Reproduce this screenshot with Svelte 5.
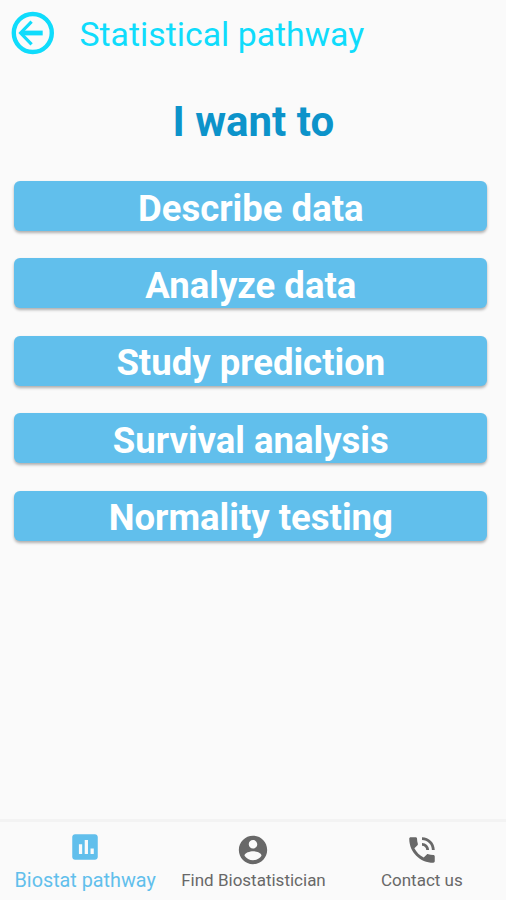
<script>
  const actions = ['Describe data', 'Analyze data', 'Study prediction', 'Survival analysis', 'Normality testing'];
</script>

<div class="screen">
  <header>
    <button class="back" aria-label="Back">
      <svg width="44" height="44" viewBox="0 0 44 44" fill="none" stroke="#0fdcfc">
        <circle cx="21.8" cy="22" r="19" stroke-width="4.4" />
        <path d="M31.7 22H10" stroke-width="4.8" />
        <path d="M20.6 10.6L9.6 22L20.6 33.4" stroke-width="3.2" />
      </svg>
    </button>
    <span class="title">Statistical pathway</span>
  </header>
  <main>
    <h1>I want to</h1>
    <div class="actions">
      {#each actions as action}
        <button class="action"><span>{action}</span></button>
      {/each}
    </div>
  </main>
  <nav>
    <a class="tab active" href="#biostat">
      <svg width="34" height="34" viewBox="0 0 24 24"><path d="M19 3H5c-1.1 0-2 .9-2 2v14c0 1.1.9 2 2 2h14c1.1 0 2-.9 2-2V5c0-1.1-.9-2-2-2zM10 17H7.7v-7h2.3v7zm4.1 0h-2.3V7h2.3v10zm4.1 0h-2.3v-4h2.3v4z" /></svg>
      <span>Biostat pathway</span>
    </a>
    <a class="tab" href="#find">
      <svg width="34" height="34" viewBox="0 0 24 24"><path d="M12 2C6.48 2 2 6.48 2 12s4.48 10 10 10 10-4.48 10-10S17.52 2 12 2zm0 3c1.66 0 3 1.34 3 3s-1.34 3-3 3-3-1.34-3-3 1.34-3 3-3zm0 14.2c-2.5 0-4.71-1.28-6-3.22.03-1.99 4-3.08 6-3.08 1.99 0 5.97 1.09 6 3.08-1.29 1.94-3.5 3.22-6 3.22z" /></svg>
      <span>Find Biostatistician</span>
    </a>
    <a class="tab" href="#contact">
      <svg width="34" height="34" viewBox="0 0 24 24"><path d="M20 15.5c-1.25 0-2.45-.2-3.57-.57-.1-.03-.21-.05-.31-.05-.26 0-.51.1-.71.29l-2.2 2.2c-2.83-1.44-5.15-3.75-6.59-6.59l2.2-2.21c.28-.26.36-.65.25-1C8.7 6.45 8.5 5.25 8.5 4c0-.55-.45-1-1-1H4c-.55 0-1 .45-1 1 0 9.39 7.61 17 17 17 .55 0 1-.45 1-1v-3.5c0-.55-.45-1-1-1zM19 12h2c0-4.97-4.03-9-9-9v2c3.87 0 7 3.13 7 7zm-4 0h2c0-2.76-2.24-5-5-5v2c1.66 0 3 1.34 3 3z" /></svg>
      <span>Contact us</span>
    </a>
  </nav>
</div>

<style>
  :global(body) {
    background: #fafafa;
  }

  .screen {
    box-sizing: border-box;
    display: flex;
    flex-direction: column;
    width: 506px;
    height: 900px;
    overflow: hidden;
    background: #fafafa;
    font-family: Roboto, sans-serif;
    white-space: nowrap;
  }

  button {
    padding: 0;
    border: 0;
    background: none;
    font: inherit;
  }

  header {
    display: flex;
    align-items: center;
    gap: 24.5px;
    height: 66px;
    padding-left: 11px;
  }

  .back {
    width: 44px;
    height: 44px;
  }

  .back svg {
    display: block;
  }

  .title {
    padding-top: 4px;
    color: #0fdcfc;
    font-size: 33.8px;
    line-height: 40px;
  }

  main {
    flex: 1;
    padding: 31px 18.7px 0 14.3px;
  }

  h1 {
    margin: 0;
    padding-left: 5px;
    text-align: center;
    color: #0c93ca;
    font-size: 42px;
    font-weight: 700;
    line-height: 50px;
  }

  .actions {
    display: flex;
    flex-direction: column;
    gap: 27.4px;
    margin-top: 34px;
  }

  .action {
    height: 50px;
    padding-top: 4.5px;
    border-radius: 6px;
    background: #61bfec;
    box-shadow: 0 2px 3px rgba(0, 0, 0, 0.3);
    color: #fff;
    font-size: 36.5px;
    font-weight: 700;
    line-height: 45.5px;
  }

  nav {
    display: flex;
    box-sizing: border-box;
    height: 81px;
    padding-left: 1px;
    border-top: 3px solid #f3f3f3;
  }

  .tab {
    display: flex;
    flex: 1;
    flex-direction: column;
    align-items: center;
    padding-top: 11px;
    color: #686868;
    font-size: 17px;
    line-height: 24px;
    text-decoration: none;
  }

  .tab svg {
    display: block;
    flex: none;
    margin-bottom: 1px;
    fill: currentColor;
  }

  .active {
    padding-top: 8px;
    color: #61bfec;
    font-size: 19.8px;
  }

  .active svg {
    margin-bottom: 5px;
  }
</style>
